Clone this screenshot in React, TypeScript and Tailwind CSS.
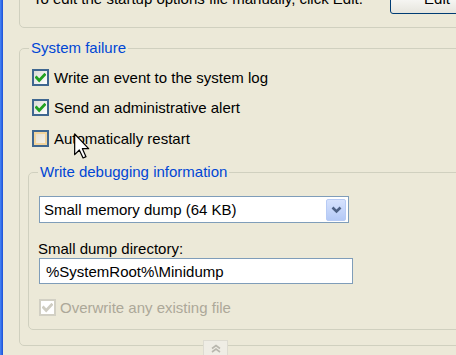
import React from "react";

function Check({ color }: { color: string }) {
  return (
    <svg width="11" height="10" viewBox="0 0 11 10">
      <polyline points="1.5,4.5 4.2,7.5 9.5,1.8" fill="none" stroke={color} strokeWidth="2.8" strokeLinecap="square" />
    </svg>
  );
}

function Box({ kind }: { kind: "checked" | "hover" | "disabled" }) {
  if (kind === "disabled") {
    return (
      <span className="w-[17px] h-[17px] shrink-0 border-2 border-[#D2D0C4] bg-white flex items-center justify-center">
        <Check color="#CFCDC2" />
      </span>
    );
  }
  if (kind === "hover") {
    return (
      <span className="w-[17px] h-[17px] shrink-0 border-2 border-[#3F6790] bg-gradient-to-br from-[#E2DCCB] to-[#F6F4EE] shadow-[inset_0_0_0_2px_#F2D49C] flex items-center justify-center" />
    );
  }
  return (
    <span className="w-[17px] h-[17px] shrink-0 border-2 border-[#3F6790] bg-gradient-to-br from-[#DCDCD7] to-white flex items-center justify-center">
      <Check color="#21A121" />
    </span>
  );
}

export default function App() {
  return (
    <div className="w-[456px] h-[355px] bg-[#ECE9D8] flex overflow-hidden relative font-['Liberation_Sans',Arial,sans-serif] text-[15px] leading-[17px] text-black">
      <div className="w-[3px] shrink-0 bg-gradient-to-r from-[#4A86F5] to-[#1B4FD8]" />
      <div className="flex-1 flex flex-col min-w-0">
        {/* top group */}
        <div className="ml-[16px] mt-[-20px] h-[48px] w-[470px] shrink-0 border border-[#D0D0BF] rounded-[5px] flex items-start pl-[13px]">
          <span className="mt-[9px] w-[357px] shrink-0 whitespace-nowrap">To edit the startup options file manually, click Edit.</span>
          <div className="mt-[10px] w-[94px] h-[23px] shrink-0 border border-[#003C74] rounded-[3px] bg-gradient-to-b from-white to-[#E6E5DD] flex items-center justify-center pb-[8px]">
            Edit
          </div>
        </div>

        {/* System failure */}
        <fieldset className="mt-[12px] ml-[16px] w-[470px] shrink-0 border border-[#D0D0BF] rounded-[5px] pb-[15px] flex flex-col">
          <legend className="ml-[9px] px-[2px] leading-[16px] text-[#0046D5]">System failure</legend>
          <div className="mt-[13px] ml-[12px] h-[17px] flex items-center gap-[5px]">
            <Box kind="checked" />
            <span className="whitespace-nowrap">Write an event to the system log</span>
          </div>
          <div className="mt-[13px] ml-[12px] h-[17px] flex items-center gap-[5px]">
            <Box kind="checked" />
            <span className="whitespace-nowrap">Send an administrative alert</span>
          </div>
          <div className="mt-[14px] ml-[12px] h-[17px] flex items-center gap-[5px]">
            <Box kind="hover" />
            <span className="whitespace-nowrap">Automatically restart</span>
          </div>

          <fieldset className="mt-[17px] ml-[8px] w-[440px] border border-[#D0D0BF] rounded-[5px] pb-[13px] flex flex-col">
            <legend className="ml-[9px] px-[2px] leading-[16px] text-[#0046D5]">Write debugging information</legend>
            <div className="mt-[16px] ml-[10px] w-[310px] h-[27px] border border-[#7F9DB9] bg-white flex items-center pl-[4px] pr-[2px]">
              <span className="flex-1 whitespace-nowrap">Small memory dump (64 KB)</span>
              <div className="w-[20px] h-[22px] rounded-[2px] border border-[#B7CBF5] bg-gradient-to-b from-[#D6E2FD] to-[#B4C9F6] flex items-center justify-center">
                <svg width="11" height="8" viewBox="0 0 11 8">
                  <polyline points="1.5,1.5 5.5,5.5 9.5,1.5" fill="none" stroke="#4D6185" strokeWidth="2.6" />
                </svg>
              </div>
            </div>
            <div className="mt-[17px] ml-[9px] whitespace-nowrap">Small dump directory:</div>
            <div className="mt-[1px] ml-[10px] w-[314px] h-[26px] border border-[#7F9DB9] bg-white flex items-center pl-[6px] whitespace-nowrap">
              %SystemRoot%\Minidump
            </div>
            <div className="mt-[15px] ml-[10px] h-[17px] flex items-center gap-[4px]">
              <Box kind="disabled" />
              <span className="whitespace-nowrap text-[#ACA899]">Overwrite any existing file</span>
            </div>
          </fieldset>
        </fieldset>
      </div>

      {/* mouse cursor */}
      <svg className="absolute left-[74px] top-[133px]" width="16" height="26" viewBox="0 0 12 19">
        <path d="M0.5 0.5 L0.5 16 L4 12.5 L6.8 18.5 L9 17.5 L6.3 11.5 L11 11.5 Z" fill="white" stroke="black" strokeWidth="0.9" strokeLinejoin="round" />
      </svg>

      {/* collapse button at bottom */}
      <div className="absolute left-[203px] top-[340px] w-[25px] h-[16px] border border-[#DDDBD1] bg-[#EFEDE5] flex items-center justify-center">
        <svg width="12" height="9" viewBox="0 0 12 9">
          <polyline points="2,4.5 6,1.5 10,4.5" fill="none" stroke="#B9B7AE" strokeWidth="1.6" />
          <polyline points="2,8 6,5 10,8" fill="none" stroke="#B9B7AE" strokeWidth="1.6" />
        </svg>
      </div>
    </div>
  );
}
